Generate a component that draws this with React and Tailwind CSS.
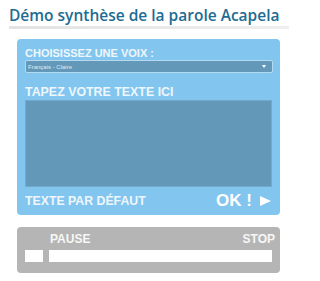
export default function App() {
  return (
    <div className="w-[299px] h-[281px] bg-white pt-[7px]">
      <div className="px-[9px]">
        <h1 className="whitespace-nowrap font-['Open_Sans',sans-serif] text-[15.5px] leading-[17px] font-semibold text-[#1d6c93]">
          Démo synthèse de la parole Acapela
        </h1>
        <div className="mt-[2px] h-[3px] w-[280px] bg-gradient-to-r from-[#e3e3e3] to-[#efefef]" />
      </div>

      <div className="ml-[17px] mt-[10px] w-[263px] h-[176px] rounded-[4px] bg-[#82c5ee] px-[8px] pt-[8px] font-['Liberation_Sans',Arial,sans-serif] font-bold text-[#eef7fd]">
        <div className="text-[11px] leading-[12px]">CHOISISSEZ UNE VOIX :</div>
        <div className="mt-[1px] flex h-[13px] w-[248px] items-center justify-between rounded-[2px] border border-[#b5d9ef] bg-[#6498b8] pl-[2px] pr-[6px]">
          <span className="text-[6px] font-normal leading-none text-[#dfeef7]">Français - Claire</span>
          <span className="h-0 w-0 border-x-[2.5px] border-t-[3px] border-x-transparent border-t-white" />
        </div>
        <div className="mt-[12px] text-[12.4px] leading-[14px]">TAPEZ VOTRE TEXTE ICI</div>
        <div className="mt-[1px] h-[87px] w-[247px] border border-[#72aacc] bg-[#6498b8]" />
        <div className="mt-[5px] flex items-center justify-between pr-[1px]">
          <span className="text-[12.3px] leading-[14px]">TEXTE PAR DÉFAUT</span>
          <span className="flex items-center text-[17px] leading-[18px] text-white">
            OK !
            <span className="ml-[8px] h-0 w-0 border-y-[5.5px] border-l-[11px] border-y-transparent border-l-white" />
          </span>
        </div>
      </div>

      <div className="ml-[17px] mt-[12px] w-[263px] h-[46px] rounded-[4px] bg-[#b5b5b5] px-[8px] pt-[6px] font-['Liberation_Sans',Arial,sans-serif] font-bold text-[#f7f7f7]">
        <div className="flex justify-between pl-[25px] text-[12px] leading-[12px]">
          <span>PAUSE</span>
          <span className="-mr-[3px]">STOP</span>
        </div>
        <div className="mt-[5px] flex gap-[6px]">
          <div className="h-[12px] w-[18px] bg-white" />
          <div className="h-[12px] w-[225px] bg-white" />
        </div>
      </div>
    </div>
  );
}
